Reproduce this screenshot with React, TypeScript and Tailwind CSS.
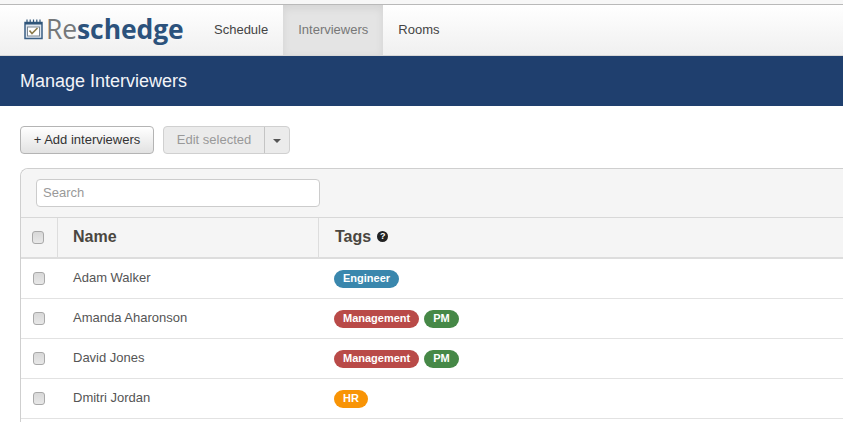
const sans = "font-['Liberation_Sans',Arial,sans-serif]";

type Tag = { label: string; color: string };

const engineer = { label: "Engineer", color: "bg-[#3a87ad]" };
const management = { label: "Management", color: "bg-[#b94a48]" };
const pm = { label: "PM", color: "bg-[#468847]" };
const hr = { label: "HR", color: "bg-[#f89406]" };

const people: { name: string; tags: Tag[] }[] = [
  { name: "Adam Walker", tags: [engineer] },
  { name: "Amanda Aharonson", tags: [management, pm] },
  { name: "David Jones", tags: [management, pm] },
  { name: "Dmitri Jordan", tags: [hr] },
];

function Logo() {
  return (
    <div className="flex items-center w-[199px] pl-[24px] pb-[1px]">
      <svg width="20" height="21" viewBox="0 0 20 21" fill="none" className="shrink-0">
        <rect x="1" y="3.5" width="17" height="16" fill="#dfe6ee" stroke="#3a5f85" strokeWidth="1.5" />
        <rect x="1" y="3" width="17" height="2.5" fill="#2f5579" />
        <path d="M3 0.5v3M6.2 0.5v3M9.5 0.5v3M12.8 0.5v3M16 0.5v3" stroke="#2f5579" strokeWidth="1.2" />
        <rect x="3.5" y="8" width="12" height="9" fill="#fff" stroke="#7a8794" />
        <path d="M5.5 11.5l2.5 3L13.5 9" stroke="#8a7a4a" strokeWidth="1.6" />
      </svg>
      <span className="text-[26.5px] leading-none tracking-[-0.1px] font-['Open_Sans',sans-serif] ml-[2px] whitespace-nowrap">
        <span className="text-[#75787a]">Re</span>
        <span className="font-bold text-[#2c527c]">schedge</span>
      </span>
    </div>
  );
}

function NavTab({ label, active }: { label: string; active?: boolean }) {
  return (
    <div
      className={
        active
          ? "flex items-center px-[15px] h-full bg-[#e4e4e4] shadow-[inset_0_3px_8px_rgba(0,0,0,0.08)] text-[#777777]"
          : "flex items-center px-[15px] h-full text-[#444444]"
      }
    >
      {label}
    </div>
  );
}

function Checkbox() {
  return (
    <span className="block w-[12px] h-[13px] rounded-[3px] border border-[#a9a9a9] bg-gradient-to-b from-[#d8d8d8] to-[#e8e8e8]" />
  );
}

export default function App() {
  return (
    <div className={`${sans} w-[843px] h-[422px] overflow-hidden bg-white`}>
      <div className="h-[5px] bg-[#f7f7f7] border-b border-[#b9b9b9]" />

      <nav className="flex h-[51px] bg-gradient-to-b from-white to-[#f0f0f0] border-b border-[#d8d8d8] text-[13px]">
        <Logo />
        <NavTab label="Schedule" />
        <NavTab label="Interviewers" active />
        <NavTab label="Rooms" />
      </nav>

      <header className="flex items-center h-[50px] pl-[20px] bg-[#1f3f6e] text-[18px] text-[#f2f4f8]">
        Manage Interviewers
      </header>

      <div className="flex pl-[20px] pt-[20px] text-[13px]">
        <button className="h-[28px] w-[134px] pb-[1px] rounded-[4px] border border-[#b4b4b4] bg-gradient-to-b from-white to-[#e2e2e2] text-[#333333]">
          + Add interviewers
        </button>
        <div className="flex h-[28px] ml-[9px] rounded-[4px] border border-[#d0d0d0] bg-[#ebebeb] text-[#999999]">
          <span className="flex items-center justify-center w-[101px] pb-[1px] border-r border-[#c4c4c4]">Edit selected</span>
          <span className="flex items-center justify-center w-[24px]">
            <span className="w-0 h-0 mt-[2px] border-x-[4px] border-x-transparent border-t-[4px] border-t-[#555555]" />
          </span>
        </div>
      </div>

      <section className="ml-[20px] mt-[14px] w-[840px] h-[270px] border-l border-t border-[#cfcfcf] rounded-tl-[8px]">
        <div className="flex items-center h-[49px] pl-[15px] bg-[#f5f5f5] rounded-tl-[8px] border-b border-[#d8d8d8]">
          <input
            placeholder="Search"
            className="w-[284px] h-[28px] px-[6px] pb-[2px] rounded-[4px] border border-[#cccccc] bg-white text-[13px] outline-none placeholder:text-[#999999]"
          />
        </div>

        <div className="flex h-[41px] bg-[#f5f5f5] border-b-2 border-[#dddddd]">
          <div className="flex items-center justify-center w-[37px] pr-[2px] border-r border-[#dddddd]">
            <Checkbox />
          </div>
          <div className="flex items-center w-[261px] pl-[15px] pb-[2px] border-r border-[#dddddd] text-[16px] font-bold text-[#4a4640]">
            Name
          </div>
          <div className="flex items-center pl-[16px] pb-[2px] gap-[6px] text-[16px] font-bold text-[#4a4640]">
            Tags
            <span className="flex items-center justify-center w-[11px] h-[11px] rounded-full bg-[#222222] text-white text-[9px] leading-none">
              ?
            </span>
          </div>
        </div>

        {people.map((person) => (
          <div key={person.name} className="flex items-center h-[40px] border-b border-[#e2e2e2]">
            <div className="flex items-center justify-center w-[37px] pr-[2px]">
              <Checkbox />
            </div>
            <div className="w-[262px] pl-[15px] -mt-[1px] pb-[1px] text-[13px] text-[#555555]">{person.name}</div>
            <div className="flex gap-[5px] pl-[14px]">
              {person.tags.map((tag) => (
                <span
                  key={tag.label}
                  className={`${tag.color} flex items-center h-[18px] px-[9px] rounded-full text-[11px] font-bold text-white`}
                >
                  {tag.label}
                </span>
              ))}
            </div>
          </div>
        ))}
      </section>
    </div>
  );
}
